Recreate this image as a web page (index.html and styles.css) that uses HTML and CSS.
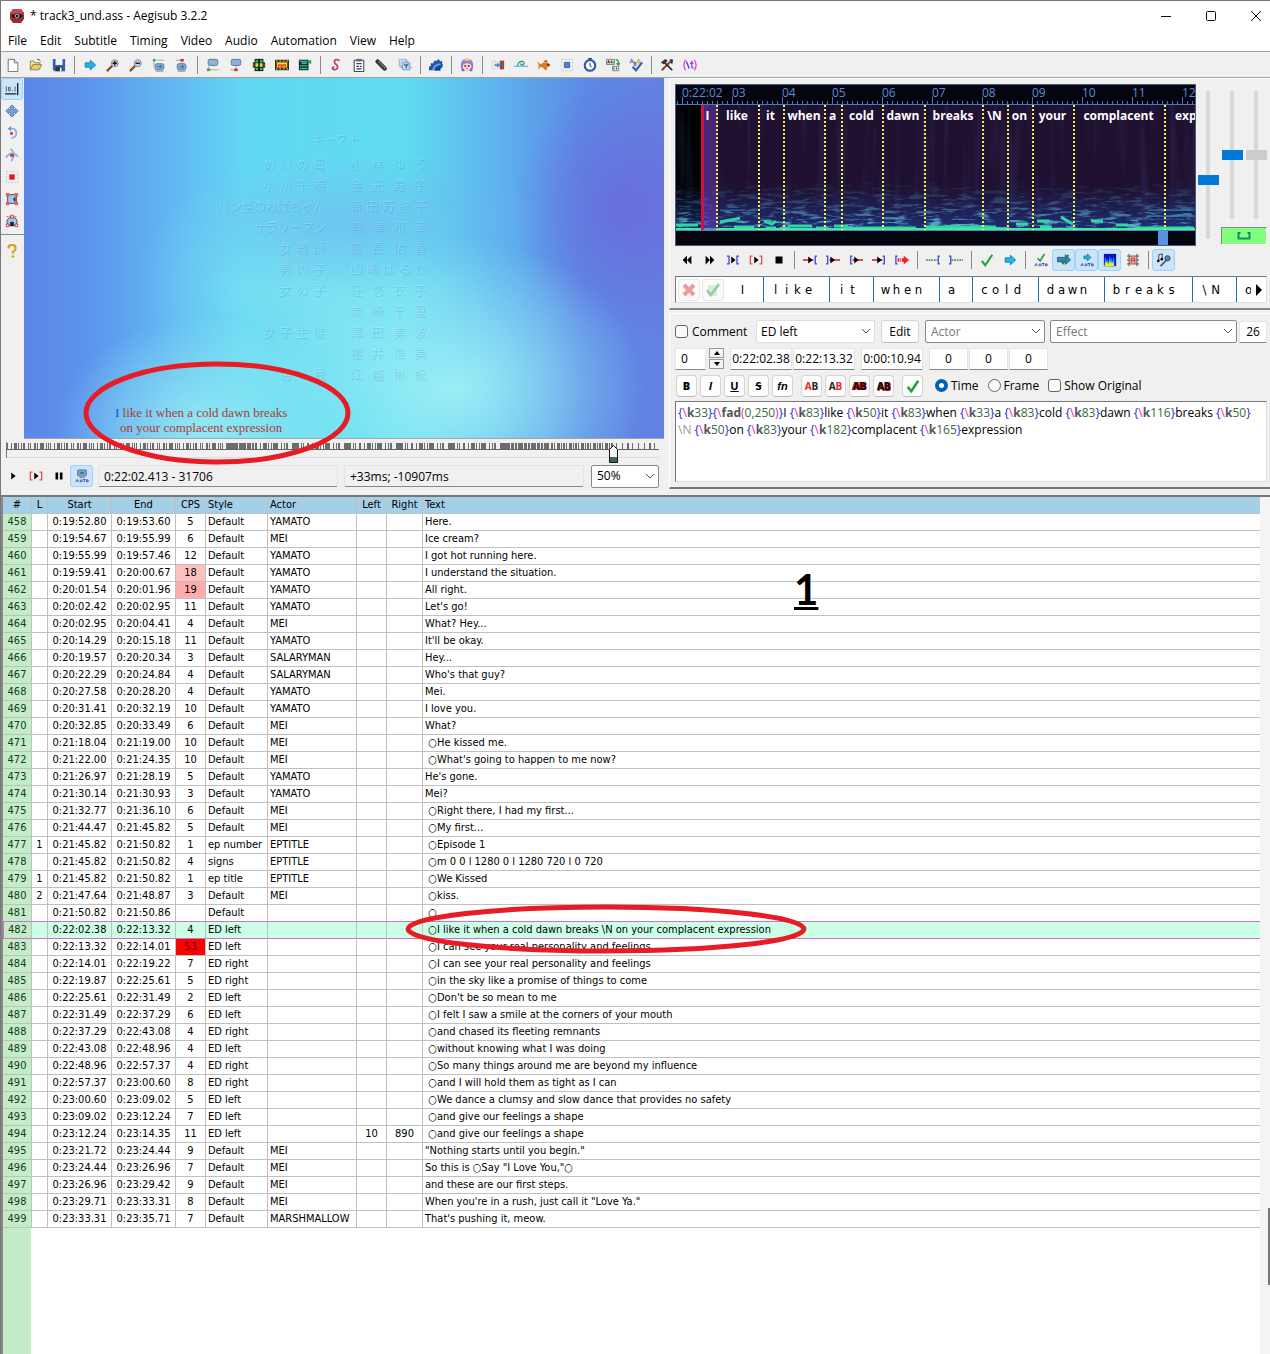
FILE: index.html
```html
<!DOCTYPE html>
<html lang="en">
<head>
<meta charset="utf-8">
<title>* track3_und.ass - Aegisub 3.2.2</title>
<link rel="stylesheet" href="styles.css">
</head>
<body>
<header class="titlebar">
  <svg class="logo" viewBox="0 0 16 16"><path d="M4 1h8l3 4v6l-3 4H4l-3-4V5z" fill="#a32a2c"/><path d="M4 1h8l3 4-4 1H5L1 5z" fill="#c8484a"/><path d="M2 8q6-6 12 0-6 5-12 0z" fill="#1b1830"/><circle cx="8" cy="8" r="2.4" fill="#8fa0d0"/><circle cx="8" cy="8" r="1.2" fill="#111"/></svg>
  <h1>* track3_und.ass - Aegisub 3.2.2</h1>
  <div class="wincontrols">
    <button aria-label="Minimize"><svg viewBox="0 0 12 12"><path d="M1 6.5h10" stroke="#111" fill="none"/></svg></button>
    <button aria-label="Maximize"><svg viewBox="0 0 12 12"><rect x="1.500" y="1.500" width="9" height="9" rx="1" stroke="#111" fill="none"/></svg></button>
    <button aria-label="Close"><svg viewBox="0 0 12 12"><path d="M1 1l10 10M11 1L1 11" stroke="#111" fill="none"/></svg></button>
  </div>
</header>
<nav class="menu">
  <button>File</button><button>Edit</button><button>Subtitle</button><button>Timing</button><button>Video</button><button>Audio</button><button>Automation</button><button>View</button><button>Help</button>
</nav>
<div class="toolbar main-tools" role="toolbar" aria-label="Main">
  <button aria-label="New"><svg viewBox="0 0 16 16"><path d="M2.500 1.500h7l4 4v10h-11z" fill="#fff" stroke="#666"/><path d="M9.500 1.500v4h4" fill="#eee" stroke="#666"/></svg></button>
  <button aria-label="Open"><svg viewBox="0 0 16 16"><path d="M1.500 13.500v-10h4l1 2h6v2" fill="#f3e3a0" stroke="#8d7a3c"/><path d="M1.500 13.500l3-6h10l-3 6z" fill="#eecb6a" stroke="#8d7a3c"/><path d="M9 2q3-2 4 2" fill="none" stroke="#555"/></svg></button>
  <button aria-label="Save"><svg viewBox="0 0 16 16"><path d="M1 1h14v14H3l-2-2z" fill="#2f62b5"/><path d="M4 1h8v7H4z" fill="#e9f2fb"/><path d="M4 10h8v5H4z" fill="#333"/><path d="M9 11h2v4H9z" fill="#fff"/></svg></button>
  <i class="sep"></i>
  <button aria-label="Jump"><svg viewBox="0 0 16 16"><path d="M2.500 5.500h6V2.500l6 5.500-6 5.500v-3h-6z" fill="#1fb6e6" stroke="#0c7fb8"/></svg></button>
  <button aria-label="Zoom in"><svg viewBox="0 0 16 16"><path d="M1 15l6-6" stroke="#8b4a30" stroke-width="2.500"/><circle cx="10" cy="6" r="4" fill="#c3cee4" stroke="#78839d"/><path d="M10 3.500v5M7.500 6h5" stroke="#111" stroke-width="1.500"/></svg></button>
  <button aria-label="Zoom out"><svg viewBox="0 0 16 16"><path d="M1 15l6-6" stroke="#8b4a30" stroke-width="2.500"/><circle cx="10" cy="6" r="4" fill="#c3cee4" stroke="#78839d"/><path d="M7.500 6h5" stroke="#111" stroke-width="1.500"/></svg></button>
  <button aria-label="Jump to start"><svg viewBox="0 0 16 16"><path d="M2 4v6M5 2.500h9" stroke="#9bb09b"/><path d="M1 1h3v3H1z" fill="#2cb24c"/><rect x="3.500" y="6.500" width="10" height="7" rx="2" fill="#89a9d3" stroke="#55739f"/><path d="M6 10h5M9 8l2 2-2 2" stroke="#0d6fa0" fill="none"/><path d="M4 15h9" stroke="#777"/></svg></button>
  <button aria-label="Jump to end"><svg viewBox="0 0 16 16"><path d="M8 3v4M1 2.500h5" stroke="#a99"/><path d="M6 1h4v3H6z" fill="#d0343a"/><rect x="2.500" y="6.500" width="10" height="7" rx="2" fill="#89a9d3" stroke="#55739f"/><path d="M5 10h5M8 8l2 2-2 2" stroke="#0d6fa0" fill="none"/><path d="M3 15h9" stroke="#777"/></svg></button>
  <i class="sep"></i>
  <button aria-label="Snap start"><svg viewBox="0 0 16 16"><rect x="2.500" y="1.500" width="11" height="7" rx="2" fill="#8fb0d8" stroke="#58749c"/><path d="M3 9v4M5 13.500h10" stroke="#9bb09b"/><path d="M1 12h4v3H1z" fill="#2cb24c"/></svg></button>
  <button aria-label="Snap end"><svg viewBox="0 0 16 16"><rect x="2.500" y="1.500" width="11" height="7" rx="2" fill="#8fb0d8" stroke="#58749c"/><path d="M8 9v4M1 13.500h5" stroke="#a99"/><path d="M6 12h4v3H6z" fill="#d0343a"/></svg></button>
  <button aria-label="Select visible"><svg viewBox="0 0 16 16"><path d="M3 1h10v14H3z" fill="#111"/><path d="M1 5h14v6H1z" fill="#16381c"/><path d="M4 2h3v3H4zM9 2h3v3H9zM4 11h3v3H4zM9 11h3v3H9z" fill="#2bb36a"/><path d="M4 6h3v4H4zM9 6h3v4H9z" fill="#e0df3a"/><path d="M1 7h2v2H1zM13 7h2v2h-2z" fill="#c33"/></svg></button>
  <button aria-label="Snap to scene"><svg viewBox="0 0 16 16"><path d="M0 2h16v12H0z" fill="#3a2c10"/><path d="M2 5h12v6H2z" fill="#ffd84a"/><path d="M1 3.500h2M5 3.500h2M9 3.500h2M13 3.500h2M1 12.500h2M5 12.500h2M9 12.500h2M13 12.500h2" stroke="#ffe9a0"/><path d="M4 11V8h3v3M9 11V8h3v3" stroke="#e2451c" stroke-width="1.500" fill="none"/></svg></button>
  <button aria-label="Shift to frame"><svg viewBox="0 0 16 16"><path d="M1 2h11v12H1z" fill="#123"/><path d="M2 4h9M2 9h9M2 12h9" stroke="#26c07a" stroke-width="1.500"/><path d="M4 6h6" stroke="#24b8d6" stroke-width="2"/><path d="M15 2v5l-4-3z" fill="#25984a"/><path d="M1 2h3v2H1z" fill="#c33"/></svg></button>
  <i class="sep"></i>
  <button aria-label="Styles"><svg viewBox="0 0 16 16"><path d="M12 3q-5-3-6 1 0 2 3 4 2 3-1 5-3 1-4-1 0-2 2-2" fill="none" stroke="#b8456a" stroke-width="2"/></svg></button>
  <button aria-label="Properties"><svg viewBox="0 0 16 16"><path d="M2.500 2.500h11v13h-11z" fill="#fff" stroke="#222"/><path d="M5 1h6v3H5z" fill="#667"/><path d="M5 6.500h6M5 9.500h3M9 9.500h2M5 12.500h6" stroke="#247" stroke-width="1.500"/></svg></button>
  <button aria-label="Attachments"><svg viewBox="0 0 16 16"><path d="M3 4l8 8" stroke="#333" stroke-width="5" stroke-linecap="round"/><path d="M4 4l8 8" stroke="#999" stroke-width="1.500" stroke-dasharray="2 1"/></svg></button>
  <button aria-label="Fonts"><svg viewBox="0 0 16 16"><path d="M1.500 1.500h8v8h-8zM3.500 3.500h8v8h-8z" fill="#e7effa" stroke="#86a7d4"/><path d="M5.500 5.500h8v8h-8z" fill="#cfe0f5" stroke="#6a90c6"/><path d="M7 8h5M9.500 8v4" stroke="#345fa5" stroke-width="1.500"/><path d="M12 11h4" stroke="#7aa"/></svg></button>
  <i class="sep"></i>
  <button aria-label="Automation"><svg viewBox="0 0 16 16"><path d="M0 14l0-4 2-1 0-3 3 0 1-3 3 0 2-2 2 3 2-1 0 3 1 2-1 3-2 1 0 3-3-1z" fill="#1d56a8"/><path d="M5 14q0-6 8-7" stroke="#6ea3e6" stroke-width="2" fill="none"/><path d="M7 15q1-4 6-5v3z" fill="#123b7c"/></svg></button>
  <i class="sep"></i>
  <button aria-label="Assistant"><svg viewBox="0 0 16 16"><circle cx="8" cy="7.500" r="7" fill="#a27bc9"/><path d="M1 8h4v7H2zM11 8h4l-1 7h-3z" fill="#8c63b8"/><path d="M3 8q5-4 10 0v3q-5 7-10 0z" fill="#fbdcc9"/><path d="M5 8h2v2H5zM9 8h2v2H9z" fill="#6d2a7c"/><path d="M5 2h6" stroke="#f3d564" stroke-width="2"/><path d="M7 12h2" stroke="#d44"/></svg></button>
  <i class="sep"></i>
  <button aria-label="Shift times"><svg viewBox="0 0 16 16"><path d="M1.500 3.500h4v9h-4z" fill="none" stroke="#bbb" stroke-dasharray="1 1"/><path d="M10 3h5v10h-5z" fill="#8b5037"/><path d="M4 7h3V5l4 3-4 3V9H4z" fill="#3f8fe0"/></svg></button>
  <button aria-label="Timing post-processor"><svg viewBox="0 0 16 16"><path d="M0 9.500h16" stroke="#79b8e0" stroke-width="1.500"/><path d="M4 9q1-6 6-5 3 2 0 4-3 0-2-2" fill="none" stroke="#1d9c8d" stroke-width="1.500"/></svg></button>
  <button aria-label="Kanji timer"><svg viewBox="0 0 16 16"><path d="M0 4l4 3q6-5 12 1-5 6-12 2l-3 3 1-5z" fill="#e07a20"/><path d="M7 4l4-2 1 3zM7 12l4 2 0-3z" fill="#b8540f"/><circle cx="12.500" cy="7.500" r="1" fill="#111"/></svg></button>
  <button aria-label="Resample"><svg viewBox="0 0 16 16"><path d="M1.500 1.500h13v13h-13z" fill="none" stroke="#c4c4c4" stroke-dasharray="2 2"/><path d="M5 5h6v6H5z" fill="#4a82d0" stroke="#2e5fa8"/></svg></button>
  <button aria-label="Timer"><svg viewBox="0 0 16 16"><path d="M6 0h4v2H6z" fill="#345"/><circle cx="8" cy="8.500" r="6" fill="#fff" stroke="#2c5da6" stroke-width="2.500"/><path d="M8 5.500V9l2 1" stroke="#123" fill="none"/></svg></button>
  <button aria-label="Translation"><svg viewBox="0 0 16 16"><path d="M.5 1.500h9v6h-9z" fill="#ddd" stroke="#777"/><path d="M2 6l1-3 1 3M6 3v3M8 4v2" stroke="#111" fill="none"/><path d="M7.500 9.500h7v5h-7z" fill="#e4efe4" stroke="#777"/><path d="M9 13v-2M12 13v-2" stroke="#111"/><path d="M11 2q4 0 3 5M12 6l2 2 2-2" stroke="#1fa53c" stroke-width="1.500" fill="none"/></svg></button>
  <button aria-label="Spell checker"><svg viewBox="0 0 16 16"><path d="M1 6l2-5 2 5M2 4.500h2" stroke="#36b" fill="none"/><path d="M6 4v5q3 0 2-2 1-2-2-3M6 6.500h2" stroke="#c33" fill="none"/><path d="M13 3q-3-2-3 1t3 1" stroke="#292" fill="none"/><path d="M4 10l4 4 7-9" stroke="#2b66c4" stroke-width="2.500" fill="none"/></svg></button>
  <i class="sep"></i>
  <button aria-label="Options"><svg viewBox="0 0 16 16"><path d="M2 14L12 4" stroke="#8a4a2c" stroke-width="2.500"/><path d="M4 4l10 10" stroke="#222" stroke-width="2"/><path d="M1 5l5-4 3 2-5 4zM11 1l4 1-1 5-2-2z" fill="#333"/></svg></button>
  <button aria-label="Cycle tag hiding"><svg viewBox="0 0 16 16"><path d="M3 2q-4 6 0 12M13 2q4 6 0 12" stroke="#f03cf0" stroke-width="1.500" fill="none"/><path d="M4 4l3 8" stroke="#34c" stroke-width="1.500"/><path d="M10 3v7q0 2 2 1M8 6h4" stroke="#a03cf0" stroke-width="1.500" fill="none"/></svg></button>
</div>

<main class="workspace">
  <section class="video-pane" aria-label="Video">
    <div class="video-row">
      <div class="vtools" role="toolbar" aria-label="Visual tools">
        <button class="on" aria-label="Standard"><svg viewBox="0 0 16 16"><path d="M1.500 5v6M4 6h2v4H4zM8 10h1M11.500 5v6" stroke="#456" fill="none"/><path d="M0 13.500h13M14.500 1v14" stroke="#124" stroke-width="1.500"/></svg></button>
        <button aria-label="Drag"><svg viewBox="0 0 16 16"><path d="M8 1l3 3H9.500v2.500H12V5l3 3-3 3V9.500H9.500V12H11l-3 3-3-3h1.500V9.500H4V11L1 8l3-3v1.500h2.500V4H5z" fill="#7da2dc" stroke="#4f74b4"/></svg></button>
        <button aria-label="Rotate Z"><svg viewBox="0 0 16 16"><path d="M5 3q8-1 8 5 0 5-6 6" stroke="#8fb0dd" stroke-width="2" fill="none"/><path d="M7 0v6L3 3z" fill="#6f95cc"/><path d="M6 7h3v3H6z" fill="#d22"/></svg></button>
        <button aria-label="Rotate XY"><svg viewBox="0 0 16 16"><path d="M1 11q7-9 14-1M6 1q8 5 1 14" stroke="#8fb0dd" stroke-width="2" fill="none"/><path d="M6 7h4v3H6z" fill="#d22"/></svg></button>
        <button aria-label="Scale"><svg viewBox="0 0 16 16"><path d="M1.500 1.500h13v13h-13z" fill="none" stroke="#c4c4c4" stroke-dasharray="2 2"/><path d="M5 5h6v6H5z" fill="#e11"/></svg></button>
        <button aria-label="Clip"><svg viewBox="0 0 16 16"><path d="M3 3h10v10H3z" fill="#a9c4ec" stroke="#444"/><path d="M11 6q-3 2 0 5h1V6z" fill="#234"/><path d="M1 1h4v4H1zM11 1h4v4h-4zM1 11h4v4H1zM11 11h4v4h-4z" fill="#e8615e"/></svg></button>
        <button aria-label="Vector clip"><svg viewBox="0 0 16 16"><path d="M3 13q-3-9 5-9t5 9z" fill="#a9c4ec" stroke="#444"/><path d="M2 3h12" stroke="#b33" stroke-dasharray="2 1"/><path d="M1.500 11.500h3v3h-3zM11.500 11.500h3v3h-3zM6.500 1.500h3v3h-3z" fill="#fff" stroke="#c22"/><path d="M6 9h4v5H6z" fill="#123"/></svg></button>
        <i class="hsep"></i>
        <button aria-label="Help"><svg viewBox="0 0 16 16"><path d="M4 5q0-4 4-4t4 4q0 2-3 4v2" stroke="#d9a520" stroke-width="2.500" fill="none"/><path d="M7.500 13h3v2.500h-3z" fill="#d9a520"/></svg></button>
      </div>
      <div class="video">
        <div class="credits" lang="ja">
          <p class="cast">キャスト</p>
          <dl>
            <dt class="w4">めいの母</dt><dd>小林ゆう</dd>
            <dt class="w4">小川千晴</dt><dd>金元寿子</dd>
            <dt>パン屋のおばちゃん</dt><dd>新田万紀子</dd>
            <dt>サラリーマン</dt><dd>興津和幸</dd>
            <dt class="w3">女教師</dt><dd>慶長佑香</dd>
            <dt class="w3">男の子</dt><dd>山崎はるか</dd>
            <dt class="w3">女の子</dt><dd>荘悠衣子</dd>
            <dt></dt><dd>赤崎千夏</dd>
            <dt class="w4">女子生徒</dt><dd>津田美波</dd>
            <dt></dt><dd>櫻井浩美</dd>
            <dt class="w3">店員</dt><dd>江越彬紀</dd>
          </dl>
        </div>
        <p class="subtitle"><b>I</b> like it when a cold dawn breaks<br>on your complacent expression</p>
      </div>
    </div>
    <svg class="keyframes" viewBox="0 0 664 26" aria-hidden="true">
      <path d="M24 .5h640" stroke="#a5a5a5"/>
      <path d="M6.500 4v16" stroke="#777"/><path d="M6 11.500h653" stroke="#666"/><path d="M7 19.500h652" stroke="#dcdcdc"/>
      <path d="M7 8h230" stroke="#6c6c6c" stroke-width="6" stroke-dasharray="1 3 1 2 3 1 1 2 1 1 2 3 1 1 1 3 2 1 1 2 4 2 1 1 1 1"/>
      <path d="M226 8h28" stroke="#6c6c6c" stroke-width="6" stroke-dasharray="7 1 4 1"/>
      <path d="M255 8h250" stroke="#6c6c6c" stroke-width="6" stroke-dasharray="2 3 1 2 4 1 1 2 1 1 5 3 1 2 1 1 2 4 7 2 1 1 1 3"/>
      <path d="M505 8h45" stroke="#6c6c6c" stroke-width="6" stroke-dasharray="5 1 3 1 2 1"/>
      <path d="M551 8h62" stroke="#6c6c6c" stroke-width="6" stroke-dasharray="2 1 1 2 3 1 1 1"/>
      <path d="M616 8h43" stroke="#6c6c6c" stroke-width="6" stroke-dasharray="1 5 1 4 2 3 1 5"/>
      <path d="M609.500 24.500v-13l4-4 4 4v13z" fill="#f6f6f6" stroke="#111"/><path d="M610 19h7v5h-7z" fill="#3a6a5c"/>
    </svg>
    <div class="playbar">
      <button class="tb" aria-label="Play"><svg viewBox="0 0 16 16"><path d="M6 4l5 4-5 4z" fill="#000"/></svg></button>
      <button class="tb" aria-label="Play line"><svg viewBox="0 0 16 16"><path d="M4 3.500H1.500v9H4M12 3.500h2.500v9H12" stroke="#e05050" stroke-width="1.500" fill="none"/><path d="M6 4l5 4-5 4z" fill="#000"/></svg></button>
      <button class="tb" aria-label="Pause"><svg viewBox="0 0 16 16"><path d="M4 4h3v8H4zM9 4h3v8H9z" fill="#000"/></svg></button>
      <button class="tb on" aria-label="Auto scroll"><svg viewBox="0 0 16 16"><rect x="3" y="1" width="10" height="7" rx="1" fill="#7f9fc8" stroke="#57749c"/><path d="M6 4.500h4" stroke="#0d7fb0" stroke-width="2"/><path d="M5 9.500h6" stroke="#667"/><path d="M1 15l1.500-3L4 15M6 12v2.500h2V12M9 12h3M10.500 12v3M13 12.500h2v2h-2z" stroke="#34a" fill="none"/></svg></button>
      <input class="status" aria-label="Position" value="0:22:02.413 - 31706" readonly>
      <input class="status" aria-label="Relative time" value="+33ms; -10907ms" readonly>
      <select class="zoom" aria-label="Zoom"><option>50%</option></select>
    </div>
    <svg class="mark mark-video" viewBox="0 0 270 106" aria-hidden="true"><ellipse cx="135" cy="53" rx="131" ry="49" fill="none" stroke="#e81c24" stroke-width="5"/></svg>
  </section>

  <section class="side-pane">
    <div class="audio" aria-label="Audio">
      <div class="audio-top">
        <div class="display">
          <div class="scale"><span>0:22:02</span><span>03</span><span>04</span><span>05</span><span>06</span><span>07</span><span>08</span><span>09</span><span>10</span><span>11</span><span>12</span></div>
          <div class="spectrum">
            <svg class="spec" viewBox="0 0 519 126" preserveAspectRatio="none" aria-hidden="true">
              <defs>
                <linearGradient id="fade" x2="0" y2="1"><stop offset=".6" stop-color="#000"/><stop offset=".8" stop-color="#444"/><stop offset="1" stop-color="#ddd"/></linearGradient>
                <mask id="low"><rect width="519" height="126" fill="url(#fade)"/></mask>
                <linearGradient id="floor" x2="0" y2="1"><stop offset=".3" stop-color="#20308a" stop-opacity="0"/><stop offset="1" stop-color="#1c409c" stop-opacity=".8"/></linearGradient>
                <filter id="grain" x="0" y="0" width="100%" height="100%"><feTurbulence type="fractalNoise" baseFrequency=".06 .3" numOctaves="3" seed="4"/><feColorMatrix values="0 0 0 0 .15  0 0 0 0 .65  0 0 0 0 .75  5 0 0 0 -2.500"/></filter>
                <filter id="streak" x="0" y="0" width="100%" height="100%"><feTurbulence type="fractalNoise" baseFrequency=".12 .008" numOctaves="2" seed="8"/><feColorMatrix values="0 0 0 0 .1  0 0 0 0 .12  0 0 0 0 .5  3 0 0 0 -1.400"/></filter>
              </defs>
              <rect width="519" height="126" fill="#1e102e"/><rect width="25" height="126" fill="#000"/>
              <rect width="519" height="126" filter="url(#streak)" opacity=".14"/>
              <rect y="60" width="519" height="66" fill="url(#floor)" opacity=".8"/>
              <rect width="519" height="126" filter="url(#grain)" mask="url(#low)"/>
              <path d="M0 121h22M44 118l20-4M58 123h20M88 117l8 3 4-3M90 124h10M112 122h24M140 124h12M158 122h14M180 124h60M250 123h70M340 120h12M361 117h12M364 123h12M385 113l12 7M415 117h12M440 121h12M460 124h58" stroke="#2fd6a8" stroke-width="3" fill="none"/>
              <path d="M0 125h519" stroke="#3fe89c" stroke-width="2"/>
              <path d="M472 106h47M470 112h49M44 106h25M384 108h12" stroke="#2d86b8" fill="none"/>
            </svg>
            <div class="syls"><span>I</span><span>like</span><span>it</span><span>when</span><span>a</span><span>cold</span><span>dawn</span><span>breaks</span><span>\N</span><span>on</span><span>your</span><span>complacent</span><span>expression</span></div>
          </div>
          <div class="hscroll"><i></i></div>
        </div>
        <div class="sliders">
          <input type="range" class="s1" aria-label="Horizontal zoom" min="0" max="100" value="39">
          <input type="range" class="s2" aria-label="Vertical zoom" min="0" max="100" value="50">
          <input type="range" class="s2" aria-label="Volume" min="0" max="100" value="50" disabled>
          <button class="link" aria-label="Link zoom and volume"><svg viewBox="0 0 14 8"><path d="M3.500 1H1.500v5.500h11V1h-2" stroke="#0d9060" stroke-width="2" fill="none"/></svg></button>
        </div>
      </div>
      <div class="toolbar audio-tools" role="toolbar" aria-label="Audio">
        <button aria-label="Previous"><svg viewBox="0 0 16 16"><path d="M8 3v10L3 8zM13 3v10L8 8z"/></svg></button>
        <button aria-label="Next"><svg viewBox="0 0 16 16"><path d="M3 3v10l5-5zM8 3v10l5-5z"/></svg></button>
        <button aria-label="Play selection"><svg viewBox="0 0 16 16"><path d="M1 3.500h2.500v9H1M15 3.500h-2.500v9H15" stroke="#44d" stroke-width="1.500" fill="none"/><path d="M6 4l5 4-5 4z"/></svg></button>
        <button aria-label="Play line"><svg viewBox="0 0 16 16"><path d="M4 3.500H1.500v9H4M12 3.500h2.500v9H12" stroke="#e05050" stroke-width="1.500" fill="none"/><path d="M6 4l5 4-5 4z"/></svg></button>
        <button aria-label="Stop"><svg viewBox="0 0 16 16"><path d="M4 4h8v8H4z"/></svg></button>
        <i class="sep"></i>
        <button aria-label="Play before start"><svg viewBox="0 0 16 16"><path d="M0 8h12" stroke="#d33" stroke-width="2"/><path d="M16 3.500h-2v9h2" stroke="#44d" stroke-width="1.500" fill="none"/><path d="M6 4l5 4-5 4z"/></svg></button>
        <button aria-label="Play after start"><svg viewBox="0 0 16 16"><path d="M4 8h12" stroke="#d33" stroke-width="2"/><path d="M0 3.500h2v9H0" stroke="#44d" stroke-width="1.500" fill="none"/><path d="M5 4l5 4-5 4z"/></svg></button>
        <button aria-label="Play first"><svg viewBox="0 0 16 16"><path d="M4 8h12" stroke="#d33" stroke-width="2"/><path d="M4 3.500H2v9h2" stroke="#44d" stroke-width="1.500" fill="none"/><path d="M6 4l5 4-5 4z"/></svg></button>
        <button aria-label="Play last"><svg viewBox="0 0 16 16"><path d="M0 8h12" stroke="#d33" stroke-width="2"/><path d="M12 3.500h2v9h-2" stroke="#44d" stroke-width="1.500" fill="none"/><path d="M6 4l5 4-5 4z"/></svg></button>
        <button aria-label="Play to end"><svg viewBox="0 0 16 16"><path d="M3 3.500H1v9h2" stroke="#44d" stroke-width="1.500" fill="none"/><path d="M3 6h2v4H3zM6 6h1v4H6zM8 6h2V3l6 5-6 5v-3H8z" fill="#e22"/></svg></button>
        <i class="sep"></i>
        <button aria-label="Lead in"><svg viewBox="0 0 16 16"><path d="M0 8h13" stroke="#4a9a4a" stroke-width="2" stroke-dasharray="2 1"/><path d="M16 3.500h-2v9h2" stroke="#44d" stroke-width="1.500" fill="none"/></svg></button>
        <button aria-label="Lead out"><svg viewBox="0 0 16 16"><path d="M3 8h13" stroke="#4a9a4a" stroke-width="2" stroke-dasharray="2 1"/><path d="M0 3.500h2v9H0" stroke="#44d" stroke-width="1.500" fill="none"/></svg></button>
        <i class="sep"></i>
        <button aria-label="Commit"><svg viewBox="0 0 16 16"><path d="M2 9l4 5 8-12" stroke="#2f9e3f" stroke-width="2.500" fill="none"/></svg></button>
        <button aria-label="Go to"><svg viewBox="0 0 16 16"><path d="M2.500 5.500h6V2.500l6 5.500-6 5.500v-3h-6z" fill="#1fb6e6" stroke="#0c7fb8"/></svg></button>
        <i class="sep"></i>
        <button aria-label="Auto commit"><svg viewBox="0 0 16 16"><path d="M4 6l3 3 5-8" stroke="#2f9e3f" stroke-width="2" fill="none"/><path d="M1 15l1.500-3L4 15M6 12v2.500h2V12M9 12h3M10.500 12v3M13 12.500h2v2h-2z" stroke="#34a" fill="none"/></svg></button>
        <button class="on" aria-label="Auto next"><svg viewBox="0 0 16 16"><path d="M.5 5h9V2l6 6-6 5v-3h-9z" fill="#3a7fd0" stroke="#1d4f96"/><path d="M4 8l3 4 6-10" stroke="#2a8a35" stroke-width="2" fill="none"/></svg></button>
        <button class="on" aria-label="Auto scroll"><svg viewBox="0 0 16 16"><path d="M4.500 3.500h4V1l4 4-4 4V6.500h-4z" fill="#1fb6e6" stroke="#0c7fb8"/><path d="M1 15l1.500-3L4 15M6 12v2.500h2V12M9 12h3M10.500 12v3M13 12.500h2v2h-2z" stroke="#34a" fill="none"/></svg></button>
        <button class="on" aria-label="Spectrum"><svg viewBox="0 0 16 16"><path d="M1 1h14v14H1z" fill="#0a0ad0"/><path d="M2 15V8l1-4 1 6 1-3 1 4 2-8 1 7 1-5 1 6 1-7 1 5v7z" fill="#19b5e8"/><path d="M2 15v-3l2-2 2 3 2-4 2 3 2-2 1 5z" fill="#f0e628"/></svg></button>
        <button aria-label="Medusa"><svg viewBox="0 0 16 16"><path d="M4 4h8v8H4z" fill="#f0b0a8"/><path d="M1 3.500h14M1 8h3M12 8h3M1 12.500h14M3.500 1v14M12.500 1v14" stroke="#543" fill="none"/><path d="M6 11V6h4v5M6 8.500h4" stroke="#c22" fill="none"/></svg></button>
        <i class="sep"></i>
        <button class="on" aria-label="Karaoke"><svg viewBox="0 0 16 16"><path d="M2 9V2l4-1v6" stroke="#234" fill="none"/><circle cx="1.500" cy="9" r="1.500"/><circle cx="5.500" cy="7" r="1.500"/><path d="M4 15l7-7" stroke="#44536c" stroke-width="2"/><circle cx="12" cy="6" r="3" fill="#5b7fc0" stroke="#345"/></svg></button>
      </div>
      <div class="karaoke">
        <button class="kbtn" disabled aria-label="Discard split"><svg viewBox="0 0 16 16"><path d="M3 3l10 10M13 3L3 13" stroke="#ec9a9a" stroke-width="4"/></svg></button>
        <button class="kbtn" disabled aria-label="Accept split"><svg viewBox="0 0 16 16"><path d="M3 3h9v11H3z" fill="#dfeadf"/><path d="M2 8l4 5 8-11" stroke="#8fcf9a" stroke-width="2.500" fill="none"/></svg></button>
        <div class="ksyl"><p><s>I</s></p><p><s>l</s><s>i</s><s>k</s><s>e</s></p><p><s>i</s><s>t</s></p><p><s>w</s><s>h</s><s>e</s><s>n</s></p><p><s>a</s></p><p><s>c</s><s>o</s><s>l</s><s>d</s></p><p><s>d</s><s>a</s><s>w</s><s>n</s></p><p><s>b</s><s>r</s><s>e</s><s>a</s><s>k</s><s>s</s></p><p><s>\</s><s>N</s></p><p><s>o</s><s>n</s></p></div>
        <button class="kmore" aria-label="Scroll right"><svg viewBox="0 0 8 12"><path d="M1 0l6 6-6 6z"/></svg></button>
      </div>
    </div>
    <form class="edit">
      <div class="line">
        <label class="chk w-comment"><input type="checkbox">Comment</label>
        <select class="style" aria-label="Style"><option>ED left</option></select>
        <button type="button" class="btn w-edit">Edit</button>
        <input class="combo actor" aria-label="Actor" placeholder="Actor">
        <input class="combo effect" aria-label="Effect" placeholder="Effect">
        <input class="field count" aria-label="Line length" value="26" readonly>
      </div>
      <div class="line">
        <input class="field layer" aria-label="Layer" value="0">
        <div class="spin"><button type="button" aria-label="Increase"><svg viewBox="0 0 6 4"><path d="M0 4l3-4 3 4z"/></svg></button><button type="button" aria-label="Decrease"><svg viewBox="0 0 6 4"><path d="M0 0l3 4 3-4z"/></svg></button></div>
        <div class="group"><input class="field time" aria-label="Start time" value="0:22:02.38"><input class="field time" aria-label="End time" value="0:22:13.32"></div>
        <div class="group"><input class="field time" aria-label="Duration" value="0:00:10.94"></div>
        <div class="group"><input class="field margin" aria-label="Left margin" value="0"><input class="field margin" aria-label="Right margin" value="0"><input class="field margin" aria-label="Vertical margin" value="0"></div>
      </div>
      <div class="line fmt">
        <div class="btns"><button type="button" class="btn"><b>B</b></button><button type="button" class="btn"><em>I</em></button><button type="button" class="btn"><u>U</u></button><button type="button" class="btn"><del>S</del></button><button type="button" class="btn"><em class="fn">fn</em></button></div>
        <div class="btns"><button type="button" class="btn ab"><span class="r">A</span>B</button><button type="button" class="btn ab">A<span class="r">B</span></button><button type="button" class="btn ab outline">AB</button><button type="button" class="btn ab outline dark">AB</button></div>
        <button type="button" class="btn" aria-label="Commit"><svg viewBox="0 0 16 16"><path d="M2 9l4 5 8-12" stroke="#2f9e3f" stroke-width="3" fill="none"/></svg></button>
        <label class="chk"><input type="radio" name="unit" checked>Time</label>
        <label class="chk"><input type="radio" name="unit">Frame</label>
        <label class="chk"><input type="checkbox">Show Original</label>
      </div>
      <div class="editor" role="textbox" aria-multiline="true" aria-label="Line text" contenteditable="true" spellcheck="false"><i>{</i><q>\</q><b>k</b><tt>33</tt><i>}{</i><q>\</q><b>fad</b><q>(</q><tt>0,250</tt><q>)</q><i>}</i>I <i>{</i><q>\</q><b>k</b><tt>83</tt><i>}</i>like <i>{</i><q>\</q><b>k</b><tt>50</tt><i>}</i>it <i>{</i><q>\</q><b>k</b><tt>83</tt><i>}</i>when <i>{</i><q>\</q><b>k</b><tt>33</tt><i>}</i>a <i>{</i><q>\</q><b>k</b><tt>83</tt><i>}</i>cold <i>{</i><q>\</q><b>k</b><tt>83</tt><i>}</i>dawn <i>{</i><q>\</q><b>k</b><tt>116</tt><i>}</i>breaks <i>{</i><q>\</q><b>k</b><tt>50</tt><i>}</i><br><span class="nl">\N</span> <i>{</i><q>\</q><b>k</b><tt>50</tt><i>}</i>on <i>{</i><q>\</q><b>k</b><tt>83</tt><i>}</i>your <i>{</i><q>\</q><b>k</b><tt>182</tt><i>}</i>complacent <i>{</i><q>\</q><b>k</b><tt>165</tt><i>}</i>expression</div>
    </form>
  </section>
</main>

<section class="grid" aria-label="Subtitles grid">
  <div class="rows">
  <table>
    <colgroup><col class="c-num"><col class="c-l"><col class="c-t"><col class="c-t"><col class="c-cps"><col class="c-style"><col class="c-actor"><col class="c-left"><col class="c-right"><col></colgroup>
    <thead><tr><th>#</th><th>L</th><th>Start</th><th>End</th><th>CPS</th><th>Style</th><th>Actor</th><th>Left</th><th>Right</th><th>Text</th></tr></thead>
    <tbody>
    <tr><td>458<td><td>0:19:52.80<td>0:19:53.60<td>5<td>Default<td>YAMATO<td><td><td>Here.
    <tr><td>459<td><td>0:19:54.67<td>0:19:55.99<td>6<td>Default<td>MEI<td><td><td>Ice cream?
    <tr><td>460<td><td>0:19:55.99<td>0:19:57.46<td>12<td>Default<td>YAMATO<td><td><td>I got hot running here.
    <tr><td>461<td><td>0:19:59.41<td>0:20:00.67<td class="warm">18<td>Default<td>YAMATO<td><td><td>I understand the situation.
    <tr><td>462<td><td>0:20:01.54<td>0:20:01.96<td class="warmer">19<td>Default<td>YAMATO<td><td><td>All right.
    <tr><td>463<td><td>0:20:02.42<td>0:20:02.95<td>11<td>Default<td>YAMATO<td><td><td>Let's go!
    <tr><td>464<td><td>0:20:02.95<td>0:20:04.41<td>4<td>Default<td>MEI<td><td><td>What? Hey...
    <tr><td>465<td><td>0:20:14.29<td>0:20:15.18<td>11<td>Default<td>YAMATO<td><td><td>It'll be okay.
    <tr><td>466<td><td>0:20:19.57<td>0:20:20.34<td>3<td>Default<td>SALARYMAN<td><td><td>Hey...
    <tr><td>467<td><td>0:20:22.29<td>0:20:24.84<td>4<td>Default<td>SALARYMAN<td><td><td>Who's that guy?
    <tr><td>468<td><td>0:20:27.58<td>0:20:28.20<td>4<td>Default<td>YAMATO<td><td><td>Mei.
    <tr><td>469<td><td>0:20:31.41<td>0:20:32.19<td>10<td>Default<td>YAMATO<td><td><td>I love you.
    <tr><td>470<td><td>0:20:32.85<td>0:20:33.49<td>6<td>Default<td>MEI<td><td><td>What?
    <tr><td>471<td><td>0:21:18.04<td>0:21:19.00<td>10<td>Default<td>MEI<td><td><td><span class="tag">○</span>He kissed me.
    <tr><td>472<td><td>0:21:22.00<td>0:21:24.35<td>10<td>Default<td>MEI<td><td><td><span class="tag">○</span>What's going to happen to me now?
    <tr><td>473<td><td>0:21:26.97<td>0:21:28.19<td>5<td>Default<td>YAMATO<td><td><td>He's gone.
    <tr><td>474<td><td>0:21:30.14<td>0:21:30.93<td>3<td>Default<td>YAMATO<td><td><td>Mei?
    <tr><td>475<td><td>0:21:32.77<td>0:21:36.10<td>6<td>Default<td>MEI<td><td><td><span class="tag">○</span>Right there, I had my first...
    <tr><td>476<td><td>0:21:44.47<td>0:21:45.82<td>5<td>Default<td>MEI<td><td><td><span class="tag">○</span>My first...
    <tr><td>477<td>1<td>0:21:45.82<td>0:21:50.82<td>1<td>ep number<td>EPTITLE<td><td><td><span class="tag">○</span>Episode 1
    <tr><td>478<td><td>0:21:45.82<td>0:21:50.82<td>4<td>signs<td>EPTITLE<td><td><td><span class="tag">○</span>m 0 0 l 1280 0 l 1280 720 l 0 720
    <tr><td>479<td>1<td>0:21:45.82<td>0:21:50.82<td>1<td>ep title<td>EPTITLE<td><td><td><span class="tag">○</span>We Kissed
    <tr><td>480<td>2<td>0:21:47.64<td>0:21:48.87<td>3<td>Default<td>MEI<td><td><td><span class="tag">○</span>kiss.
    <tr><td>481<td><td>0:21:50.82<td>0:21:50.86<td><td>Default<td><td><td><td><span class="tag">○</span>
    <tr class="active"><td>482<td><td>0:22:02.38<td>0:22:13.32<td>4<td>ED left<td><td><td><td><span class="tag">○</span>I like it when a cold dawn breaks \N on your complacent expression
    <tr><td>483<td><td>0:22:13.32<td>0:22:14.01<td class="hot">53<td>ED left<td><td><td><td><span class="tag">○</span>I can see your real personality and feelings
    <tr><td>484<td><td>0:22:14.01<td>0:22:19.22<td>7<td>ED right<td><td><td><td><span class="tag">○</span>I can see your real personality and feelings
    <tr><td>485<td><td>0:22:19.87<td>0:22:25.61<td>5<td>ED right<td><td><td><td><span class="tag">○</span>in the sky like a promise of things to come
    <tr><td>486<td><td>0:22:25.61<td>0:22:31.49<td>2<td>ED left<td><td><td><td><span class="tag">○</span>Don't be so mean to me
    <tr><td>487<td><td>0:22:31.49<td>0:22:37.29<td>6<td>ED left<td><td><td><td><span class="tag">○</span>I felt I saw a smile at the corners of your mouth
    <tr><td>488<td><td>0:22:37.29<td>0:22:43.08<td>4<td>ED right<td><td><td><td><span class="tag">○</span>and chased its fleeting remnants
    <tr><td>489<td><td>0:22:43.08<td>0:22:48.96<td>4<td>ED left<td><td><td><td><span class="tag">○</span>without knowing what I was doing
    <tr><td>490<td><td>0:22:48.96<td>0:22:57.37<td>4<td>ED right<td><td><td><td><span class="tag">○</span>So many things around me are beyond my influence
    <tr><td>491<td><td>0:22:57.37<td>0:23:00.60<td>8<td>ED right<td><td><td><td><span class="tag">○</span>and I will hold them as tight as I can
    <tr><td>492<td><td>0:23:00.60<td>0:23:09.02<td>5<td>ED left<td><td><td><td><span class="tag">○</span>We dance a clumsy and slow dance that provides no safety
    <tr><td>493<td><td>0:23:09.02<td>0:23:12.24<td>7<td>ED left<td><td><td><td><span class="tag">○</span>and give our feelings a shape
    <tr><td>494<td><td>0:23:12.24<td>0:23:14.35<td>11<td>ED left<td><td>10<td>890<td><span class="tag">○</span>and give our feelings a shape
    <tr><td>495<td><td>0:23:21.72<td>0:23:24.44<td>9<td>Default<td>MEI<td><td><td>"Nothing starts until you begin."
    <tr><td>496<td><td>0:23:24.44<td>0:23:26.96<td>7<td>Default<td>MEI<td><td><td>So this is ○Say "I Love You,"○
    <tr><td>497<td><td>0:23:26.96<td>0:23:29.42<td>9<td>Default<td>MEI<td><td><td>and these are our first steps.
    <tr><td>498<td><td>0:23:29.71<td>0:23:33.31<td>8<td>Default<td>MEI<td><td><td>When you're in a rush, just call it "Love Ya."
    <tr><td>499<td><td>0:23:33.31<td>0:23:35.71<td>7<td>Default<td>MARSHMALLOW<td><td><td>That's pushing it, meow.
    </tbody>
  </table>
  </div>
  <div class="vscroll"><i></i></div>
  <svg class="mark mark-row" viewBox="0 0 404 52" aria-hidden="true"><ellipse cx="202" cy="26" rx="198" ry="22" fill="none" stroke="#e81c24" stroke-width="5"/></svg>
  <p class="note">1</p>
</section>
</body>
</html>
```
FILE: styles.css
```css
* { box-sizing: border-box; }
html { height: 100%; }
body {
  margin: 0; min-height: 100vh; display: flex; flex-direction: column;
  background: #f0f0f0; color: #000;
  font: 12px/16px "Open Sans", "Noto Sans", sans-serif;
  border-left: 1px solid #777; border-top: 1px solid #777;
}
button, input, select { font: inherit; color: inherit; margin: 0; padding: 0; }
button { border: 0; background: none; }
p, h1, dl, dd { margin: 0; }
svg { display: block; flex: none; }

.titlebar { display: flex; align-items: center; height: 29px; background: #fff; padding-left: 8px; gap: 5px; }
.titlebar h1 { flex: 1; font-size: 12px; font-weight: 400; }
.logo { width: 16px; height: 16px; }
.wincontrols { display: flex; gap: 17px; }
.wincontrols button { width: 28px; height: 29px; display: grid; place-items: center; }
.wincontrols svg { width: 12px; height: 12px; }

.menu { display: flex; gap: 1px; height: 21px; background: #fff; padding-left: 1px; }
.menu button { padding: 0 6px; }

.toolbar { display: flex; align-items: center; }
.toolbar button, .tb { width: 23px; height: 22px; display: grid; place-items: center; flex: none; }
.toolbar svg, .tb svg, .vtools svg { width: 14px; height: 14px; }
.sep { width: 8px; height: 18px; flex: none; background: linear-gradient(#888, #888) center / 1px 100% no-repeat; }
.main-tools { height: 27px; border-top: 1px solid #a0a0a0; border-bottom: 1px solid #a0a0a0; }
.on { background: #cce4f7; border: 1px solid #99d1ff; border-radius: 3px; }

.workspace { display: flex; gap: 5px; }
.video-pane { position: relative; width: 663px; flex: none; }
.video-row { display: flex; }
.vtools { width: 23px; flex: none; }
.vtools button { width: 22px; height: 22px; display: grid; place-items: center; }
.hsep { display: block; height: 1px; margin: 2px 0 5px; background: #888; }
.video {
  position: relative; width: 640px; height: 360px; overflow: hidden;
  background:
    radial-gradient(ellipse 190px 70px at 330px 145px, rgba(108,188,240,.75), transparent),
    radial-gradient(ellipse 150px 110px at 180px 350px, rgba(150,236,244,.9), transparent),
    radial-gradient(ellipse 190px 150px at 430px 310px, rgba(158,240,246,.95), transparent),
    radial-gradient(ellipse 180px 130px at 290px 210px, rgba(140,228,242,.6), transparent),
    radial-gradient(ellipse 110px 130px at 600px 130px, rgba(106,104,218,.8), transparent),
    linear-gradient(90deg, #5c86e8 0, #5b92ec 60px, #62b4f2 140px, #62d8f2 220px, #60dcf0 380px, #5eb4ee 470px, #5c8ae6 560px, #6480e2 640px);
}
.credits { position: absolute; left: 189px; top: 53px; width: 214px; color: rgba(235,250,255,.2); text-shadow: 1px 1px 0 rgba(50,120,190,.24); font: 12px/16px "Noto Sans CJK JP", sans-serif; }
.cast { width: 48px; margin: 0 0 0 99px; padding-bottom: 5px; text-align: justify; text-align-last: justify; }
.credits dl { display: grid; grid-template-columns: 112px 76px; grid-auto-rows: 21px; column-gap: 25px; }
.credits dt { justify-self: end; white-space: nowrap; }
.credits dt, .credits dd { text-align: justify; text-align-last: justify; line-height: 24px; }
.w4 { width: 62px; }
.w3 { width: 46px; }
.subtitle { position: absolute; left: 91px; bottom: 3px; text-align: center; color: #b03a35; font: 13px/15px "Liberation Serif", serif; }
.subtitle b { color: #1550d0; font-weight: 400; }
.keyframes { width: 664px; height: 26px; margin-left: -1px; }
.playbar { display: flex; align-items: center; height: 24px; }
.playbar .tb.on { height: 22px; }
.status { width: 240px; height: 22px; padding: 0 5px; border: 1px solid #e4e4e4; border-bottom-color: #888; background: #f0f0f0; border-radius: 2px; }
.playbar .status { margin-left: 5px; margin-right: 1px; }
.playbar .zoom { margin-left: 6px; width: 68px; height: 23px; border: 1px solid #888; padding-left: 5px; }
select, .combo {
  appearance: none; border: 1px solid #ddd; border-radius: 2px; background: #fff url("data:image/svg+xml,%3Csvg xmlns='http://www.w3.org/2000/svg' viewBox='0 0 8 5'%3E%3Cpath d='M0 0l4 4 4-4' fill='none' stroke='%23555'/%3E%3C/svg%3E") right 4px center / 8px 5px no-repeat;
}

.side-pane { flex: 1; min-width: 0; padding-bottom: 6px; }
.audio { border-left: 1px solid #fff; border-bottom: 2px solid #888; border-top: 1px solid #fff; padding: 5px 3px 5px 5px; }
.audio-top { display: flex; }
.display { flex: 1; min-width: 0; height: 162px; border: 1px solid #4a5a80; background: #05050f; display: flex; flex-direction: column; }
.scale { display: flex; height: 20px; padding-left: 6px; overflow: hidden; color: #5c8cd6; border-bottom: 1px solid #4a78c0;
  background: repeating-linear-gradient(90deg, #4a78c0 0 1px, transparent 1px 50px) 6px 100% / 100% 7px no-repeat, repeating-linear-gradient(90deg, #4a78c0 0 1px, transparent 1px 5px) 1px 100% / 100% 3px no-repeat; }
.scale span { width: 50px; flex: none; }
.spectrum { flex: 1; position: relative; }
.spec { position: absolute; inset: 0; width: 100%; height: 100%; }
.syls { position: absolute; inset: 0; display: flex; overflow: hidden; padding-left: 25px; font-weight: 700; color: #fff; line-height: 22px; }
.syls span { flex: none; text-align: center; padding-right: 4px; background: repeating-linear-gradient(#f0ee50 0 2px, transparent 2px 4px) right / 2px 100% no-repeat; }
.syls span:nth-child(1) { width: 17px; padding-right: 7px; background-color: rgba(110,60,190,.5); border-left: 3px solid #d0104c; }
.syls span:nth-child(2), .syls span:nth-child(7) { width: 42px; }
.syls span:nth-child(3), .syls span:nth-child(9), .syls span:nth-child(10) { width: 25px; }
.syls span:nth-child(4), .syls span:nth-child(6), .syls span:nth-child(11) { width: 41px; }
.syls span:nth-child(5) { width: 17px; }
.syls span:nth-child(8) { width: 58px; }
.syls span:nth-child(12) { width: 91px; }
.syls span:nth-child(13) { width: 83px; padding-right: 0; background: none; }
.syls span:nth-child(4) { padding-right: 3px; }
.hscroll { height: 15px; border-top: 1px solid #5a86c8; display: flex; justify-content: flex-end; padding-right: 27px; }
.hscroll i { width: 10px; background: #5a90e0; }
.sliders { width: 71px; height: 162px; flex: none; display: grid; grid-template-columns: 22px 22px 22px; grid-template-rows: 131px 18px; column-gap: 2px; row-gap: 5px; padding: 7px 0 0 1px; align-content: start; align-items: start; justify-items: center; }
input[type=range] { appearance: none; writing-mode: vertical-lr; direction: rtl; background: linear-gradient(#d8d8d8, #d8d8d8) center / 4px 100% no-repeat; width: 22px; }
.s1 { height: 148px; grid-row: 1 / 3; }
.s2 { height: 128px; }
input[type=range]::-webkit-slider-thumb { appearance: none; width: 21px; height: 10px; background: #0078d7; }
input[type=range]:disabled::-webkit-slider-thumb { background: #ccc; }
.link { grid-column: 2 / 4; width: 46px; height: 18px; background: #80ff80; border: 1px solid #888; border-right-color: #fff; border-bottom-color: #fff; display: grid; place-items: center; }
.link svg { width: 14px; height: 8px; }
.audio-tools { height: 28px; }
.karaoke { display: flex; align-items: center; height: 27px; margin-top: 2px; background: #fff; border: 1px solid #777; border-right-color: #ddd; border-bottom-color: #ddd; padding-left: 2px; }
.kbtn { width: 22px; height: 22px; margin-right: 2px; border: 1px solid #e6e6e6; border-radius: 3px; background: #fafafa; display: grid; place-items: center; flex: none; }
.kbtn svg { width: 16px; height: 16px; }
.ksyl { flex: 1; min-width: 0; display: flex; overflow: hidden; margin-left: 5px; font: 13px/25px "DejaVu Sans Condensed", "DejaVu Sans", sans-serif; }
.ksyl p { flex: none; padding: 0 15px 0 6px; border-right: 1px solid #1a70b0; white-space: nowrap; display: flex; }
.ksyl s { text-decoration: none; width: 11px; text-align: center; }
.kmore { width: 15px; height: 25px; display: grid; place-items: center; flex: none; }
.kmore svg { width: 8px; height: 12px; }

.edit { margin-top: 3px; border-top: 1px solid #fff; border-left: 1px solid #fff; border-bottom: 2px solid #777; padding: 6px 3px 5px 5px; }
.line { display: flex; align-items: center; height: 23px; margin-bottom: 4px; }
.chk { display: flex; align-items: center; gap: 4px; }
.chk input { appearance: none; width: 13px; height: 13px; border: 1px solid #666; border-radius: 3px; background: #fafafa; }
.chk input[type=radio] { border-radius: 50%; }
.chk input[type=radio]:checked { border: 4px solid #005fb8; background: #fff; }
.w-comment { width: 81px; }
.style { width: 119px; height: 23px; padding-left: 4px; }
.btn { width: 21px; height: 22px; border: 1px solid #d4d4d4; border-bottom-color: #bbb; border-radius: 4px; background: #fdfdfd; display: grid; place-items: center; grid-auto-flow: column; justify-content: center; flex: none; }
.btn svg { width: 14px; height: 14px; }
.w-edit { width: 38px; height: 23px; margin: 0 6px; }
.combo { height: 23px; border-color: #888; padding-left: 5px; min-width: 0; }
.combo::placeholder { color: #777; opacity: 1; }
.actor { width: 120px; margin-right: 5px; }
.effect { flex: 1; margin-right: 2px; }
.field { height: 22px; border: 1px solid #e4e4e4; border-bottom-color: #888; background: #fff; text-align: center; }
.count { width: 28px; }
.layer { width: 31px; text-align: left; padding-left: 5px; }
.spin { width: 15px; margin: 0 6px 0 3px; display: grid; gap: 1px; }
.spin button { height: 10px; border: 1px solid #999; background: #f4f4f4; display: grid; place-items: center; }
.spin svg { width: 6px; height: 4px; }
.group { display: flex; gap: 1px; margin-right: 6px; }
.group .time { width: 62px; }
.group .margin { width: 39px; }
.btns { display: flex; gap: 3px; margin-right: 8px; }
.fmt { padding-left: 1px; }
.fmt > .btn { margin-right: 12px; }
.fmt .chk { margin-right: 9px; gap: 3px; }
.btns .btn { font-weight: 700; font-size: 11px; }
.fn { font-family: "Liberation Sans", sans-serif; }
.ab { color: #222; }
.btns .ab { font-size: 10px; }
.r { color: #e22; }
.outline { color: #111; text-shadow: 1px 0 #b00, -1px 0 #b00; }
.dark { text-shadow: 1px 1px #900, 1px 0 #b00; }
.editor { height: 81px; background: #fff; border: 1px solid #777; border-right-color: #ddd; border-bottom-color: #ddd; padding: 2px; line-height: 17px; white-space: nowrap; overflow: hidden; }
.editor i { font-style: normal; color: #2828d8; }
.editor q { quotes: none; color: #f020c8; }
.editor b { color: #555; }
.editor tt { font: inherit; color: #3c6a3c; }
.nl { color: #999; }

.grid { flex: 1; display: flex; position: relative; border-left: 2px solid #888; border-top: 2px solid #777; }
.rows { flex: 1; min-width: 0; background: linear-gradient(90deg, #c4ecc9 28px, #fff 28px); }
.vscroll { width: 10px; background: #f4f4f4; position: relative; }
.vscroll i { position: absolute; right: 0; top: 83%; width: 2px; height: 9%; background: #777; }
table { width: 100%; table-layout: fixed; border-spacing: 0; font: 11px/16px "DejaVu Sans Condensed", "DejaVu Sans", sans-serif; }
.c-num { width: 29px; } .c-l { width: 16px; } .c-t { width: 64px; } .c-cps { width: 30px; } .c-style { width: 62px; } .c-actor { width: 89px; } .c-left { width: 30px; } .c-right { width: 36px; }
th, td { height: 17px; padding: 0; border-right: 1px solid #c0c0c0; border-bottom: 1px solid #c0c0c0; text-align: center; font-weight: 400; white-space: nowrap; overflow: hidden; }
th { background: #a5cfe7; }
td:first-child { background: #c4ecc9; color: #17391a; }
:is(th, td):nth-child(6), :is(th, td):nth-child(7), :is(th, td):nth-child(10) { text-align: left; padding-left: 2px; }
:is(th, td):last-child { border-right: 0; }
.warm { background: #ffc0c0; }
.warmer { background: #ffacac; }
.hot { background: #f00; color: #600; }
.active td { background: #ccffe6; }
.active td, tr:has(+ .active) td { border-bottom-color: #d070c8; }
.active td:first-child { background: #c4ecc9; border-left: 1px solid #d070c8; }
.tag { display: inline-block; width: 12px; text-align: right; }

.mark { position: absolute; pointer-events: none; }
.mark-video { left: 81px; top: 282px; width: 270px; height: 106px; z-index: 2; }
.mark-row { left: 401px; top: 406px; width: 404px; height: 52px; }
.note { position: absolute; left: 791px; top: 68px; font: 700 42px/48px Lato, "Open Sans", sans-serif; text-decoration: underline; text-decoration-thickness: 3px; }
```
